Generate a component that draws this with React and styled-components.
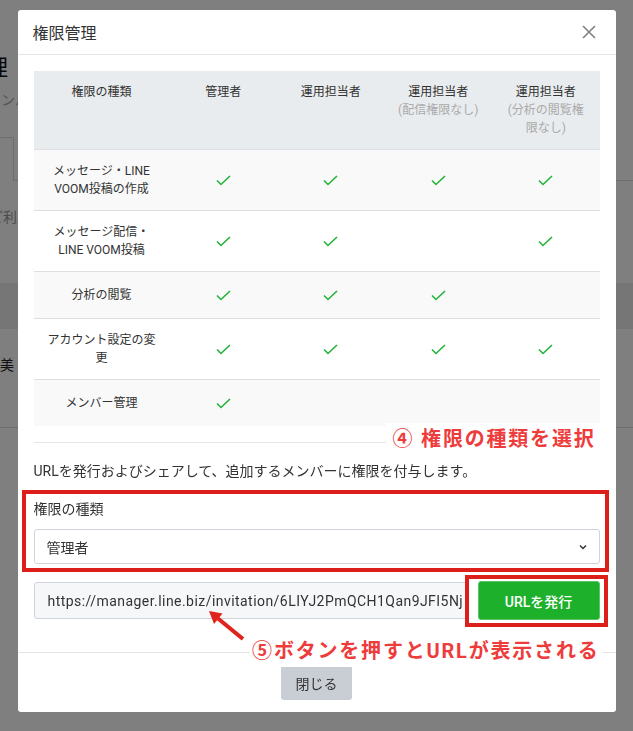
import React from 'react';
import styled, { createGlobalStyle } from 'styled-components';

const GlobalStyle = createGlobalStyle`
  html, body {
    margin: 0;
    padding: 0;
    background: #ffffff;
  }
  body {
    font-family: Roboto, "Noto Sans CJK JP", sans-serif;
    color: #333333;
    overflow: hidden;
  }
  * {
    box-sizing: border-box;
  }
`;

/* page behind the dialog */

const BgPage = styled.div`
  width: 633px;
  height: 731px;
  overflow: hidden;
  display: flex;
  flex-direction: column;
`;

const BgTitle = styled.div`
  margin: 54px 0 0 -80px;
  font-size: 22px;
  line-height: 28px;
  color: #111;
  white-space: nowrap;
`;

const BgSub = styled.div`
  margin: 8px 0 0 -13px;
  font-size: 14px;
  line-height: 20px;
  color: #aaa;
  white-space: nowrap;
`;

const BgTabs = styled.div`
  margin-top: 27px;
  height: 44px;
  border-bottom: 1px solid #dcdcdc;
  display: flex;
`;

const BgTab = styled.div`
  margin-left: -80px;
  width: 94px;
  height: 44px;
  border: 1px solid #dcdcdc;
  border-bottom: none;
  background: #fff;
`;

const BgNote = styled.div`
  margin: 26px 0 0 ${(p) => p.$shift}px;
  font-size: 14px;
  line-height: 20px;
  color: ${(p) => p.$color};
  white-space: nowrap;
`;

const BgBand = styled.div`
  margin-top: 56px;
  height: 46px;
  background: #ecedee;
`;

const BgLine = styled.div`
  margin-top: 52px;
  border-top: 1px solid #dcdcdc;
`;

/* dialog */

const Overlay = styled.div`
  position: fixed;
  inset: 0;
  background: rgba(0, 0, 0, 0.5);
  display: flex;
  justify-content: center;
  align-items: flex-start;
  padding-top: 10px;
`;

const Modal = styled.div`
  width: 598px;
  background: #fff;
  border-radius: 3px;
  display: flex;
  flex-direction: column;
`;

const ModalHeader = styled.div`
  height: 45px;
  padding: 0 16px 0 15px;
  border-bottom: 1px solid #e5e5e5;
  display: flex;
  align-items: center;
  justify-content: space-between;
`;

const ModalTitle = styled.h5`
  margin: 0;
  font-size: 16px;
  font-weight: 400;
  color: #333;
`;

const CloseIcon = styled.button`
  border: none;
  background: none;
  padding: 0;
  margin-right: 3px;
  width: 16px;
  height: 16px;
  display: flex;
  align-items: center;
  justify-content: center;
  color: #808080;
`;

const ModalBody = styled.div`
  padding: 16px 16px 32px;
  display: flex;
  flex-direction: column;
`;

const PermTable = styled.div`
  display: flex;
  flex-direction: column;
  font-size: 12px;
  line-height: 18px;
  color: #333;
`;

const TableRow = styled.div`
  display: grid;
  grid-template-columns: 136px repeat(4, 1fr);
  background: ${(p) => (p.$head ? '#e9ecee' : p.$striped ? '#f9f9f9' : '#ffffff')};
  border-bottom: ${(p) => (p.$last ? 'none' : '1px solid #dcdfe3')};
  align-items: ${(p) => (p.$head ? 'start' : 'center')};
`;

const Cell = styled.div`
  padding: 12px;
  min-height: 46px;
  display: flex;
  flex-direction: column;
  align-items: center;
  justify-content: center;
  text-align: center;
`;

const HeadCell = styled.div`
  padding: 12px;
  text-align: center;
`;

const HeadSub = styled.span`
  color: #aaaaaa;
`;

const Divider = styled.div`
  position: relative;
  margin-top: 16px;
  border-top: 1px solid #e5e5e5;
`;

const Callout = styled.div`
  position: absolute;
  right: ${(p) => p.$right}px;
  top: ${(p) => p.$top}px;
  background: #fff;
  padding: ${(p) => p.$pad};
  font-size: 20px;
  line-height: 28px;
  font-weight: 700;
  letter-spacing: 1.8px;
  color: #ee3b3b;
  white-space: nowrap;
  z-index: 2;
`;

const Description = styled.p`
  margin: 18px 0 0;
  font-size: 14px;
  line-height: 20px;
  color: #333;
`;

const FormGroup = styled.div`
  position: relative;
  margin-top: 18px;
  display: flex;
  flex-direction: column;
  gap: 10px;
`;

const Label = styled.div`
  font-size: 14px;
  line-height: 20px;
  color: #333;
`;

const Select = styled.div`
  height: 35px;
  padding: 0 12px;
  border: 1px solid #ced4da;
  border-radius: 3px;
  background: #fff;
  display: flex;
  align-items: center;
  justify-content: space-between;
  font-size: 14px;
  color: #333;
`;

const Highlight = styled.div`
  position: absolute;
  top: ${(p) => p.$t}px;
  right: ${(p) => p.$r}px;
  bottom: ${(p) => p.$b}px;
  left: ${(p) => p.$l}px;
  border: 4px solid #dc1f1a;
  pointer-events: none;
  z-index: 1;
`;

const UrlRow = styled.div`
  position: relative;
  margin-top: 17px;
  display: flex;
  align-items: center;
  gap: 10px;
`;

const UrlInput = styled.input`
  flex: 1;
  min-width: 0;
  height: 37px;
  padding: 0 2px 0 13px;
  border: 1px solid #ced4da;
  border-radius: 3px;
  background: #f6f7f9;
  font-family: Roboto, "Noto Sans CJK JP", sans-serif;
  font-size: 14px;
  letter-spacing: 0.45px;
  color: #333;
  outline: none;
`;

const IssueWrap = styled.div`
  position: relative;
  width: 122px;
  flex: none;
`;

const IssueButton = styled.button`
  width: 122px;
  height: 39px;
  border: 1px solid #5cc466;
  border-radius: 3px;
  background: #1cb02b;
  color: #fff;
  font-family: Roboto, "Noto Sans CJK JP", sans-serif;
  font-size: 14px;
  font-weight: 500;
`;

const Arrow = styled.svg`
  position: absolute;
  left: 167px;
  top: 23px;
  z-index: 2;
`;

const ModalFooter = styled.div`
  border-top: 1px solid #e5e5e5;
  padding: 12px 16px;
  display: flex;
  justify-content: center;
`;

const CloseButton = styled.button`
  width: 71px;
  height: 35px;
  border: none;
  border-radius: 3px;
  background: #c9cdd4;
  color: #333;
  font-family: Roboto, "Noto Sans CJK JP", sans-serif;
  font-size: 14px;
`;

const Check = () => (
  <svg width="15" height="11" viewBox="0 0 15 11">
    <polyline points="1,5.5 5,9.5 14,1" fill="none" stroke="#22b23a" strokeWidth="1.6" />
  </svg>
);

const rows = [
  { name: 'メッセージ・LINE VOOM投稿の作成', marks: [1, 1, 1, 1] },
  { name: 'メッセージ配信・LINE VOOM投稿', marks: [1, 1, 0, 1] },
  { name: '分析の閲覧', marks: [1, 1, 1, 0] },
  { name: 'アカウント設定の変更', marks: [1, 1, 1, 1] },
  { name: 'メンバー管理', marks: [1, 0, 0, 0] },
];

const App = () => (
  <>
    <GlobalStyle />
    <BgPage>
      <BgTitle>権限管理</BgTitle>
      <BgSub>メンバー</BgSub>
      <BgTabs>
        <BgTab />
      </BgTabs>
      <BgNote $shift={-11} $color="#999">ご利用</BgNote>
      <BgBand />
      <BgNote $shift={0} $color="#222">美</BgNote>
      <BgLine />
    </BgPage>

    <Overlay>
      <Modal>
        <ModalHeader>
          <ModalTitle>権限管理</ModalTitle>
          <CloseIcon>
            <svg width="14" height="14" viewBox="0 0 14 14">
              <path d="M1 1 L13 13 M13 1 L1 13" stroke="currentColor" strokeWidth="1.6" />
            </svg>
          </CloseIcon>
        </ModalHeader>

        <ModalBody>
          <PermTable>
            <TableRow $head>
              <HeadCell>権限の種類</HeadCell>
              <HeadCell>管理者</HeadCell>
              <HeadCell>運用担当者</HeadCell>
              <HeadCell>
                運用担当者
                <br />
                <HeadSub>(配信権限なし)</HeadSub>
              </HeadCell>
              <HeadCell>
                運用担当者
                <br />
                <HeadSub>(分析の閲覧権限なし)</HeadSub>
              </HeadCell>
            </TableRow>
            {rows.map((r, i) => (
              <TableRow key={r.name} $striped={i % 2 === 0} $last={i === rows.length - 1}>
                <Cell>{r.name}</Cell>
                {r.marks.map((m, j) => (
                  <Cell key={j}>{m ? <Check /> : null}</Cell>
                ))}
              </TableRow>
            ))}
          </PermTable>

          <Divider>
            <Callout $right={0} $top={-20} $pad="2px 4px 4px 7px">④ 権限の種類を選択</Callout>
          </Divider>

          <Description>URLを発行およびシェアして、追加するメンバーに権限を付与します。</Description>

          <FormGroup>
            <Label>権限の種類</Label>
            <Select>
              <span>管理者</span>
              <svg width="8" height="6" viewBox="0 0 8 6">
                <path d="M1 1.5 L4 4.5 L7 1.5" fill="none" stroke="#333" strokeWidth="1.5" />
              </svg>
            </Select>
            <Highlight $t={-9} $r={-9} $b={-8} $l={-12} />
          </FormGroup>

          <UrlRow>
            <UrlInput readOnly value="https://manager.line.biz/invitation/6LIYJ2PmQCH1Qan9JFI5Nj" />
            <IssueWrap>
              <IssueButton>URLを発行</IssueButton>
              <Highlight $t={-6} $r={-8} $b={-7} $l={-13} />
            </IssueWrap>
            <Arrow width="50" height="40" viewBox="0 0 50 40">
              <line x1="42" y1="35" x2="17" y2="14.5" stroke="#e0231c" strokeWidth="4" />
              <polygon points="8,7 21.5,9.5 13,20" fill="#e0231c" />
            </Arrow>
            <Callout $right={-2} $top={54} $pad="2px 2px">⑤ボタンを押すとURLが表示される</Callout>
          </UrlRow>
        </ModalBody>

        <ModalFooter>
          <CloseButton>閉じる</CloseButton>
        </ModalFooter>
      </Modal>
    </Overlay>
  </>
);

export default App;
